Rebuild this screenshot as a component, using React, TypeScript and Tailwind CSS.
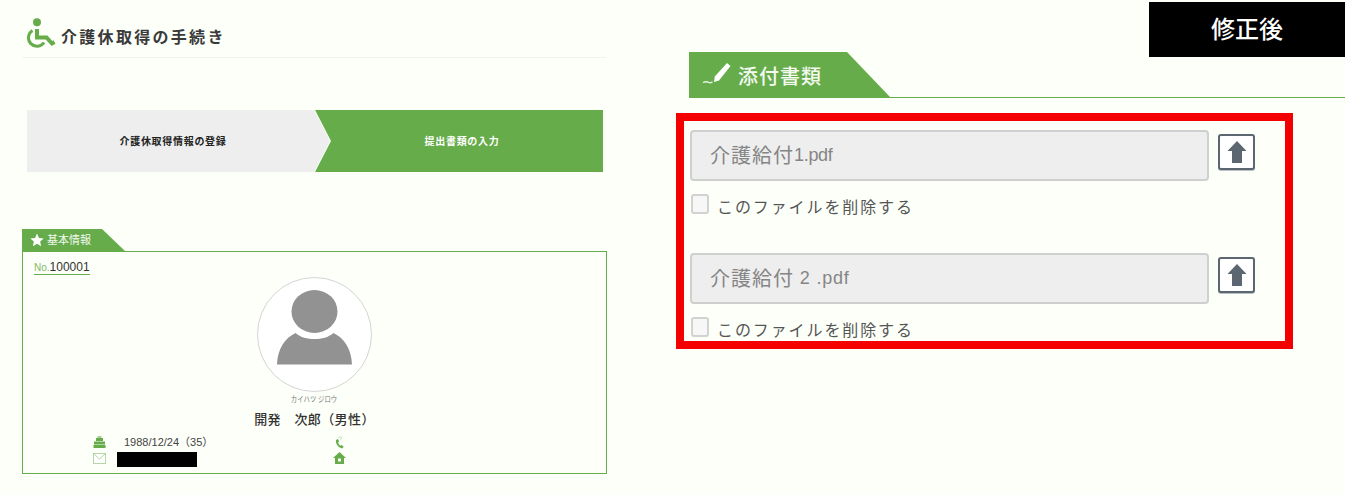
import React from "react";

const G = "#66ac4a";

function Wheelchair() {
  return (
    <svg width="34" height="30" viewBox="0 0 34 30" className="shrink-0 block">
      <circle cx="15" cy="4.300" r="4" fill={G} />
      <path d="M15 11v8.500h9.500l5.500 6 2.500-1.500" fill="none" stroke={G} strokeWidth="4" />
      <path d="M10.500 12.500A8.500 8.500 0 1 0 22 24.500" fill="none" stroke={G} strokeWidth="3" />
    </svg>
  );
}

function Pencil() {
  return (
    <svg width="30" height="30" viewBox="0 0 30 30" className="-mt-[5px] shrink-0 block">
      <path d="M26 3l3.500 3L18 20.500l-5 1.500.8-5.500z" fill="#fff" />
      <path d="M2 22.500c2-1 4-1 6 0 1 .5 2.500 0 3.500-.8" fill="none" stroke="#e9f3e4" strokeWidth="1.300" />
    </svg>
  );
}

function Star() {
  return (
    <svg width="14" height="14" viewBox="0 0 24 24" className="shrink-0 block">
      <path d="M12 1l3.400 7.400 8 .9-6 5.400 1.700 8L12 18.600 4.900 22.700l1.700-8-6-5.400 8-.9z" fill="#fff" />
    </svg>
  );
}

function Cake() {
  return (
    <svg width="13" height="12" viewBox="0 0 13 12" className="block">
      <rect x="4.500" y="0" width="4" height="2" fill="#a9cf99" />
      <rect x="3" y="2" width="7" height="3" fill={G} />
      <rect x="1" y="5.500" width="11" height="3" fill={G} />
      <rect x="0.500" y="9" width="12" height="3" fill={G} />
    </svg>
  );
}

function Mail() {
  return (
    <svg width="13" height="11" viewBox="0 0 13 11" className="block">
      <rect x="0.500" y="0.500" width="12" height="10" fill="#fff" stroke="#b5d6a7" />
      <path d="M1 1l5.500 5L12 1" fill="none" stroke="#b5d6a7" />
    </svg>
  );
}

function Phone() {
  return (
    <svg width="11" height="13" viewBox="0 0 11 13" className="block">
      <path d="M2 4C1.500 7.500 3.500 11 8 12.500l1.800-1.800-2.300-1.700-1 .7C5 9 4.200 7.500 4.200 6l1-.6L4 3z" fill={G} />
      <path d="M4.500 2C5 .6 7 .4 7.600 1.600 8 2.800 6.700 3.500 6 3" fill="none" stroke="#a9cf99" strokeWidth=".7" />
    </svg>
  );
}

function Home() {
  return (
    <svg width="13" height="12" viewBox="0 0 13 12" className="block">
      <path fillRule="evenodd" d="M6.500 0L13 6h-2v6H2V6H0zM5 6.500v3h3v-3z" fill={G} />
    </svg>
  );
}

function Avatar() {
  return (
    <svg width="115" height="115" viewBox="0 0 115 115" className="block">
      <circle cx="57.500" cy="57.500" r="57" fill="#fff" stroke="#d4d4d4" />
      <ellipse cx="57.500" cy="34.500" rx="23" ry="21.500" fill="#929292" />
      <path d="M20 87.500C20.500 72 28 61 38.500 56c5 4.500 12 6 19 6s14-1.500 19-6C87 61 94.500 72 95 87.500z" fill="#929292" />
    </svg>
  );
}

function UploadButton() {
  return (
    <div className="mt-1 ml-[9px] flex h-9 w-[37px] items-center justify-center rounded-[3px] border-2 border-[#5b6670] bg-white shadow-[0_1px_0_#b9c0c6]">
      <svg width="20" height="24" viewBox="0 0 20 24" className="block">
        <path d="M10 1l9.500 10H15v12H5V11H.5z" fill="#5b6670" />
      </svg>
    </div>
  );
}

function FileField({ cjk, latin, latinClass, className }: { cjk: string; latin: string; latinClass: string; className?: string }) {
  return (
    <div className={className}>
      <div className="flex items-start">
        <div className="flex h-[51px] w-[519px] items-center rounded border-2 border-[#cfcfcf] bg-[#eeeeee] pl-[18px] text-[#858585]">
          <span className="text-[20px] tracking-[1px]">{cjk}</span>
          <span className={latinClass}>{latin}</span>
        </div>
        <UploadButton />
      </div>
      <div className="mt-[13px] ml-px flex h-5 items-start">
        <div className="h-5 w-[18px] shrink-0 rounded-[3px] border-2 border-[#d2d2d2] bg-[#f7f7f7]" />
        <span className="mt-[4px] ml-2 text-[16px] leading-5 tracking-[1.900px] text-[#555555]">
          このファイルを削除する
        </span>
      </div>
    </div>
  );
}

export default function App() {
  return (
    <div className="relative flex h-[495px] w-[1345px] overflow-hidden bg-[#fdfff9] [font-family:'Liberation_Sans','Noto_Sans_CJK_JP',sans-serif]">
      <div className="ml-[22px] w-[585px] shrink-0">
        <div className="flex h-[58px] w-[584px] items-start border-b border-[#f1f2ee] pt-[18px]">
          <Wheelchair />
          <h1 className="mt-[9px] ml-[5px] text-[16px] leading-[22px] font-bold tracking-[2.300px] text-[#3a3a3a]">
            介護休取得の手続き
          </h1>
        </div>

        <div className="mt-[52px] ml-[5px] flex h-[62px] w-[576px] text-[10px] font-bold tracking-[0.7px]">
          <div className="flex w-[303px] shrink-0 items-center justify-center bg-[#eeeeee] pr-[11px] text-[#222222] [clip-path:polygon(0_0,287px_0,303px_50%,287px_100%,0_100%)]">
            介護休取得情報の登録
          </div>
          <div className="-ml-[15px] flex flex-1 items-center justify-center bg-[#66ac4a] pl-[6px] text-white [clip-path:polygon(0_0,100%_0,100%_100%,0_100%,16px_50%)]">
            提出書類の入力
          </div>
        </div>

        <div className="mt-[57px]">
          <div className="flex h-[22px] w-[103px] items-center gap-[3px] bg-[#66ac4a] pl-2 text-[11px] text-white [clip-path:polygon(0_0,80px_0,103px_100%,0_100%)]">
            <Star />
            <span className="text-[#f3f8ef]">基本情報</span>
          </div>
          <div className="h-[223px] border border-[#66ac4a] pt-[9px] pl-[11px]">
            <div className="w-fit border-b border-[#66ac4a] text-[12px] leading-[13px] text-[#333333]">
              <span className="text-[10px] text-[#7fb866]">No.</span>100001
            </div>
            <div className="mt-[2px] -ml-[11px] flex flex-col items-center">
              <Avatar />
              <div className="mt-[2px] h-3 text-[8px] leading-3 text-[#777777]">
                <span className="inline-block scale-x-[0.8]">カイハツ ジロウ</span>
              </div>
              <div className="mt-[5px] text-[13px] leading-[18px] font-medium tracking-[0.4px] text-[#333333]">
                開発　次郎（男性）
              </div>
            </div>
            <div className="mt-[5px] ml-[59px] text-[11px] leading-[15px] text-[#444444]">
              <div className="flex h-[16px] items-center">
                <div className="w-[31px]"><Cake /></div>
                <div className="w-[210px]">1988/12/24（35）</div>
                <Phone />
              </div>
              <div className="mt-[2px] flex h-[15px] items-start">
                <div className="w-[24px] pt-px"><Mail /></div>
                <div className="h-[15px] w-[80px] bg-black" />
                <div className="ml-[136px]"><Home /></div>
              </div>
            </div>
          </div>
        </div>
      </div>

      <div className="ml-[69px] flex-1">
        <div className="mt-[52px] ml-[13px] h-[46px] border-b border-[#66ac4a]">
          <div className="flex h-[45px] w-[201px] items-center bg-[#66ac4a] pt-[5px] pl-[12px] text-[20px] font-medium tracking-[1px] text-[#f4f9f0] [clip-path:polygon(0_0,158px_0,201px_100%,0_100%)]">
            <Pencil />
            <span className="ml-[7px]">添付書類</span>
          </div>
        </div>
        <div className="mt-[15px] h-[236px] w-[617px] overflow-hidden border-8 border-[#f40000] pt-[9px] pl-[6px]">
          <FileField cjk="介護給付" latin="1.pdf" latinClass="text-[18px] tracking-[-0.3px]" />
          <FileField cjk="介護給付" latin=" 2 .pdf" latinClass="text-[18px] tracking-[0.8px] whitespace-pre" className="mt-[39px]" />
        </div>
      </div>

      <div className="absolute top-[2px] left-[1149px] flex h-[55px] w-[196px] items-center justify-center bg-black text-[24px] font-medium text-white">
        修正後
      </div>
    </div>
  );
}
